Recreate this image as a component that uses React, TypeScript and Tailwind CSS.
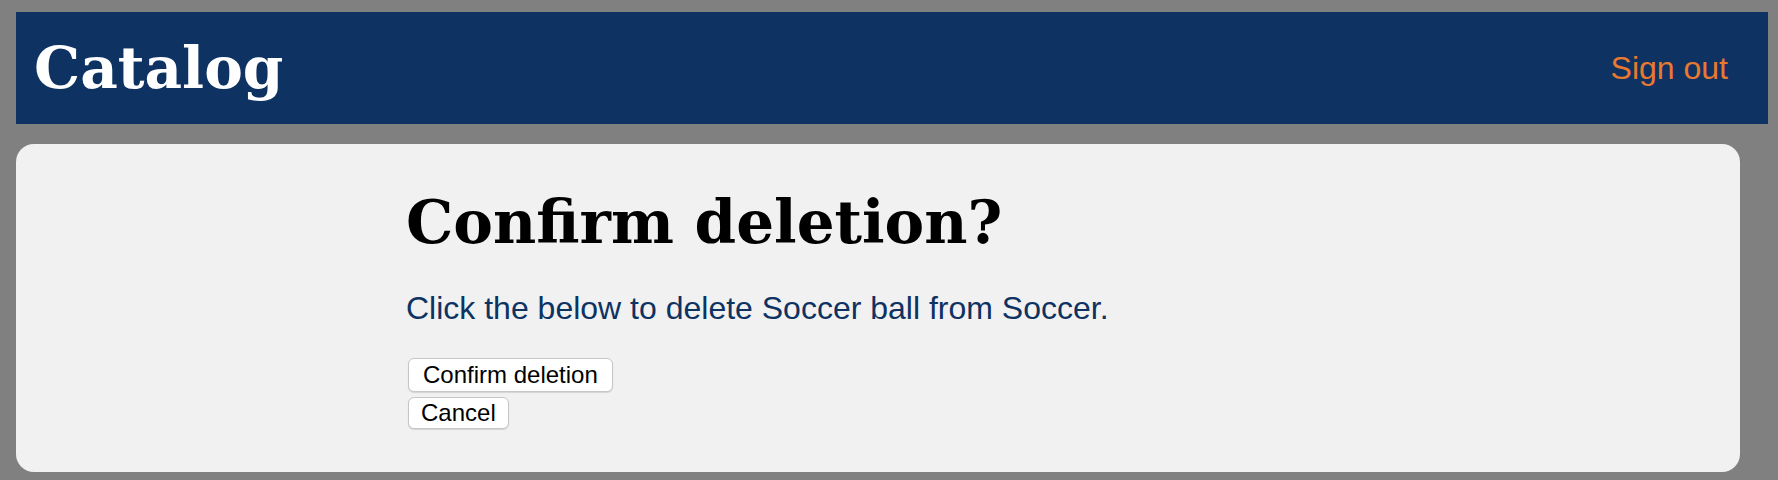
const serif = { fontFamily: '"DejaVu Serif", Georgia, serif' };

const Header = () => {
  return (
    <header className="mt-[12px] ml-[16px] w-[1752px] h-[112px] bg-[#0e3262] flex items-center justify-between pl-[18px] pr-[40px]">
      <h1 className="text-[58px] leading-[64px] font-bold text-white" style={serif}>
        Catalog
      </h1>
      <a href="#" className="text-[32px] leading-[36px] text-[#e9792e] font-['Liberation_Sans',Arial,sans-serif]">
        Sign out
      </a>
    </header>
  );
};

const App = () => {
  return (
    <div className="w-[1778px] h-[480px] bg-[#808080] overflow-hidden">
      <Header />
      <main className="mt-[20px] ml-[16px] w-[1724px] h-[328px] rounded-[18px] bg-[#f1f1f1]">
        <div className="ml-[390px] pt-[46px] flex flex-col items-start font-['Liberation_Sans',Arial,sans-serif]">
          <h1 className="text-[59.5px] leading-[64px] font-bold text-black" style={serif}>
            Confirm deletion?
          </h1>
          <p className="mt-[36px] text-[32px] leading-[36px] text-[#0e3262]">
            Click the below to delete Soccer ball from Soccer.
          </p>
          <div className="mt-[32px] ml-[2px] flex flex-col items-start gap-[5px]">
            <button className="h-[34px] px-[14px] text-[24px] leading-none text-black bg-white border border-[#c6c6c6] rounded-[6px] shadow-[0_1px_1px_rgba(0,0,0,0.12)]">
              Confirm deletion
            </button>
            <button className="h-[32px] px-[12px] text-[24px] leading-none text-black bg-white border border-[#c6c6c6] rounded-[6px] shadow-[0_1px_1px_rgba(0,0,0,0.12)]">
              Cancel
            </button>
          </div>
        </div>
      </main>
    </div>
  );
};

export default App;
